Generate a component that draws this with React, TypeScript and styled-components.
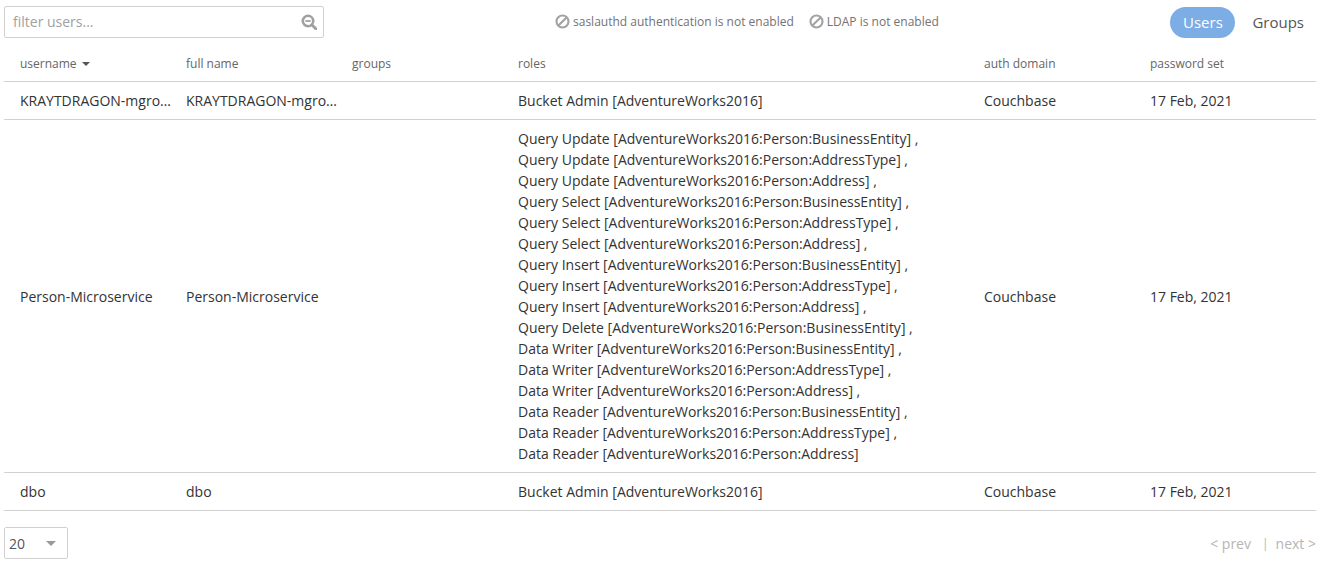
import React from "react";
import styled, { createGlobalStyle } from "styled-components";

const Global = createGlobalStyle`
  html, body { margin: 0; padding: 0; background: #fff; }
  body { font-family: "Open Sans", "Liberation Sans", sans-serif; color: #333; }
`;

const Page = styled.div`
  padding: 6px 5px 0 4px;
  width: 1312px;
`;

const Toolbar = styled.div`
  display: flex;
  align-items: center;
  height: 32px;
`;

const SearchBox = styled.div`
  display: flex;
  align-items: center;
  justify-content: space-between;
  box-sizing: border-box;
  width: 320px;
  height: 32px;
  padding: 0 6px 0 8px;
  border: 1px solid #d1d1d1;
  border-radius: 2px;
`;

const SearchInput = styled.input`
  flex: 1;
  min-width: 0;
  border: 0;
  outline: 0;
  padding: 0 0 2px;
  font: 14px "Open Sans", sans-serif;
  color: #333;
  &::placeholder { color: #a1a1a1; opacity: 1; }
`;

const Notices = styled.div`
  display: flex;
  align-items: center;
  gap: 15px;
  margin-left: 231px;
  padding-bottom: 2px;
  font-size: 12px;
  color: #737373;
`;

const Notice = styled.span`
  display: inline-flex;
  align-items: center;
  gap: 3px;
`;

const Tabs = styled.div`
  display: flex;
  align-items: center;
  margin-left: auto;
`;

const Tab = styled.span<{ $active?: boolean }>`
  display: inline-flex;
  align-items: center;
  justify-content: center;
  box-sizing: border-box;
  height: 31px;
  width: ${(p) => (p.$active ? "65px" : "auto")};
  margin-left: ${(p) => (p.$active ? "0" : "17px")};
  margin-right: ${(p) => (p.$active ? "0" : "12px")};
  border-radius: 16px;
  font-size: 15px;
  padding-bottom: 1px;
  background: ${(p) => (p.$active ? "#7dade5" : "transparent")};
  color: ${(p) => (p.$active ? "#fff" : "#555")};
`;

const Columns = `
  display: grid;
  grid-template-columns: 166px 166px 166px 466px 166px 182px;
  border-bottom: 1px solid #d1d1d1;
`;

const HeaderRow = styled.div`
  ${Columns}
  box-sizing: content-box;
  height: 35px;
  padding-top: 8px;
  align-items: center;
`;

const HeaderCell = styled.div`
  padding-left: 16px;
  font-size: 12px;
  color: #666;
  display: flex;
  align-items: center;
  gap: 5px;
`;

const SortCaret = styled.span`
  width: 0;
  height: 0;
  border-left: 4px solid transparent;
  border-right: 4px solid transparent;
  border-top: 4px solid #555;
`;

const Row = styled.div`
  ${Columns}
  align-items: center;
`;

const Cell = styled.div`
  box-sizing: border-box;
  padding: 8px 0 8px 16px;
  font-size: 14px;
  line-height: 21px;
  color: #333;
  min-width: 0;
  white-space: nowrap;
`;

const RoleLine = styled.div`
  white-space: nowrap;
`;

const Footer = styled.div`
  display: flex;
  align-items: center;
  justify-content: space-between;
  margin-top: 16px;
`;

const PageSize = styled.div`
  display: flex;
  align-items: center;
  justify-content: space-between;
  box-sizing: border-box;
  width: 64px;
  height: 32px;
  padding: 0 11px 0 4px;
  border: 1px solid #d1d1d1;
  border-radius: 2px;
  font-size: 14px;
  color: #555;
`;

const SelectCaret = styled.span`
  width: 0;
  height: 0;
  border-left: 5px solid transparent;
  border-right: 5px solid transparent;
  border-top: 5px solid #999;
`;

const Pager = styled.div`
  display: flex;
  align-items: center;
  font-size: 14px;
  color: #b5b5b5;
`;

const PagerSep = styled.span`
  margin: 0 10px 0 11px;
  font-size: 12px;
  color: #b5b5b5;
  margin-right: 7px;
  margin-left: 11px;
`;

const SearchIcon = () => (
  <svg width="16" height="16" viewBox="0 0 16 16" aria-hidden="true">
    <circle cx="7" cy="7" r="5.2" fill="none" stroke="#a0a0a0" strokeWidth="2.6" />
    <path d="M4.4 7h5.2" stroke="#a0a0a0" strokeWidth="1.8" />
    <path d="M10.8 10.8l4 4" stroke="#a0a0a0" strokeWidth="3" strokeLinecap="round" />
  </svg>
);

const BanIcon = () => (
  <svg width="15" height="15" viewBox="0 0 14 14" aria-hidden="true">
    <circle cx="7" cy="7" r="5.6" fill="none" stroke="#a3a3a3" strokeWidth="2" />
    <path d="M3.2 10.8l7.6-7.6" stroke="#a3a3a3" strokeWidth="2" />
  </svg>
);

const scopes = ["BusinessEntity", "AddressType", "Address"];
const db = "AdventureWorks2016:Person:";
const roleLines: string[] = [
  ...scopes.map((s) => `Query Update [${db}${s}] ,`),
  ...scopes.map((s) => `Query Select [${db}${s}] ,`),
  ...scopes.map((s) => `Query Insert [${db}${s}] ,`),
  `Query Delete [${db}BusinessEntity] ,`,
  ...scopes.map((s) => `Data Writer [${db}${s}] ,`),
  `Data Reader [${db}BusinessEntity] ,`,
  `Data Reader [${db}AddressType] ,`,
  `Data Reader [${db}Address]`,
];

const users = [
  { name: "KRAYTDRAGON-mgro…", roles: ["Bucket Admin [AdventureWorks2016]"] },
  { name: "Person-Microservice", roles: roleLines },
  { name: "dbo", roles: ["Bucket Admin [AdventureWorks2016]"] },
];

export default function App() {
  return (
    <Page>
      <Global />
      <Toolbar>
        <SearchBox>
          <SearchInput placeholder="filter users..." />
          <SearchIcon />
        </SearchBox>
        <Notices>
          <Notice><BanIcon />saslauthd authentication is not enabled</Notice>
          <Notice><BanIcon />LDAP is not enabled</Notice>
        </Notices>
        <Tabs>
          <Tab $active>Users</Tab>
          <Tab>Groups</Tab>
        </Tabs>
      </Toolbar>
      <HeaderRow>
        <HeaderCell>username <SortCaret /></HeaderCell>
        <HeaderCell>full name</HeaderCell>
        <HeaderCell>groups</HeaderCell>
        <HeaderCell>roles</HeaderCell>
        <HeaderCell>auth domain</HeaderCell>
        <HeaderCell>password set</HeaderCell>
      </HeaderRow>
      {users.map((u) => (
        <Row key={u.name}>
          <Cell>{u.name}</Cell>
          <Cell>{u.name}</Cell>
          <Cell />
          <Cell>
            {u.roles.map((r) => (
              <RoleLine key={r}>{r}</RoleLine>
            ))}
          </Cell>
          <Cell>Couchbase</Cell>
          <Cell>17 Feb, 2021</Cell>
        </Row>
      ))}
      <Footer>
        <PageSize>20<SelectCaret /></PageSize>
        <Pager>
          &lt; prev<PagerSep>|</PagerSep>next &gt;
        </Pager>
      </Footer>
    </Page>
  );
}
